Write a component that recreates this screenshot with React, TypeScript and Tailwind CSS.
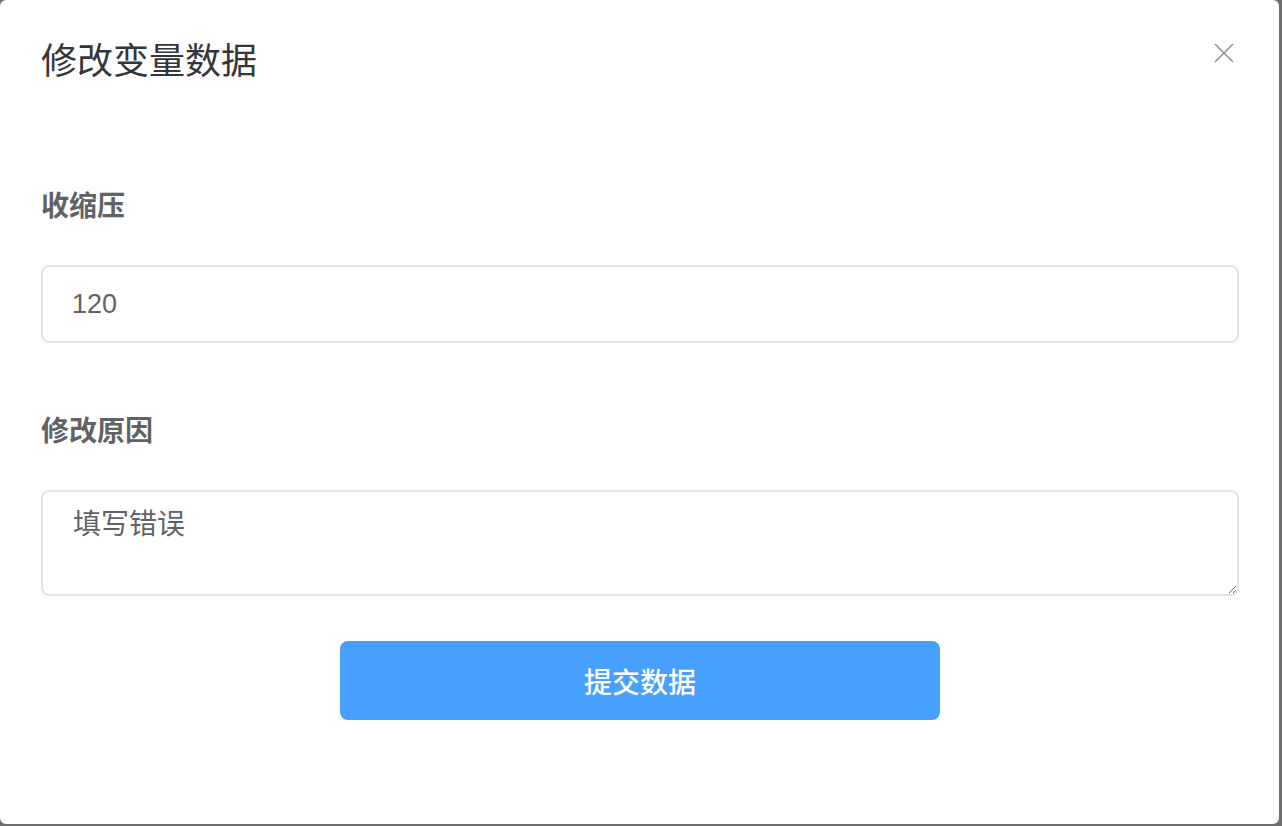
import React from "react";

export default function App() {
  const font = { fontFamily: '"Noto Sans CJK SC", "Noto Sans", sans-serif' };
  const inputFont = { fontFamily: '"Liberation Sans", "Noto Sans CJK SC", sans-serif' };
  return (
    <div className="w-full h-[826px] bg-[#6e6e6e] overflow-hidden" style={font}>
      <div className="w-[1279px] h-[824px] bg-white rounded-[6px] pl-[41px] pr-[45px] pt-[40px] flex flex-col">
        <div className="flex items-start justify-between h-[36px]">
          <div className="text-[36px] leading-[36px] text-[#35363a]">修改变量数据</div>
          <svg width="20" height="20" viewBox="0 0 20 20" className="mt-[3px]">
            <path d="M1 1 L19 19 M19 1 L1 19" stroke="#909399" strokeWidth="1.6" fill="none" />
          </svg>
        </div>
        <div className="w-[1198px] flex flex-col">
          <div className="mt-[114px] h-[28px] text-[28px] leading-[28px] font-bold text-[#606266]">收缩压</div>
          <div
            className="mt-[47px] h-[78px] border-2 border-[#e2e4e9] rounded-[8px] px-[29px] flex items-center text-[27px] text-[#606266]"
            style={inputFont}
          >
            120
          </div>
          <div className="mt-[72px] h-[28px] text-[28px] leading-[28px] font-bold text-[#606266]">修改原因</div>
          <textarea
            defaultValue="填写错误"
            className="mt-[47px] h-[106px] w-full border-2 border-[#e2e4e9] rounded-[8px] px-[30px] py-[9px] text-[28px] leading-[1.5] text-[#606266] outline-none resize-y"
            style={font}
          />
          <div className="mt-[45px] flex justify-center">
            <button className="w-[600px] h-[79px] bg-[#48a0fe] rounded-[8px] text-white text-[28px] font-medium">
              提交数据
            </button>
          </div>
        </div>
      </div>
    </div>
  );
}
